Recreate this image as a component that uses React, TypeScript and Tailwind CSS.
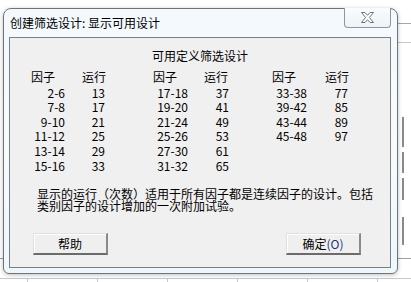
import React from "react";

const groups: { f: string[]; r: string[] }[] = [
  { f: ["2-6", "7-8", "9-10", "11-12", "13-14", "15-16"], r: ["13", "17", "21", "25", "29", "33"] },
  { f: ["17-18", "19-20", "21-24", "25-26", "27-30", "31-32"], r: ["37", "41", "49", "53", "61", "65"] },
  { f: ["33-38", "39-42", "43-44", "45-48"], r: ["77", "85", "89", "97"] },
];

function Col({ head, items, cls }: { head: string; items: string[]; cls: string }) {
  return (
    <div className={"flex flex-col " + cls}>
      <div className="leading-[14.6px] whitespace-nowrap mb-[1px]">{head}</div>
      {items.map((v) => (
        <div key={v} className="leading-[14.6px] text-right whitespace-nowrap">
          {v}
        </div>
      ))}
    </div>
  );
}

export default function App() {
  return (
    <div
      className="relative w-[411px] h-[282px] overflow-hidden bg-white text-black"
      style={{ fontFamily: '"Noto Sans CJK SC", "Noto Sans", sans-serif' }}
    >
      {/* background window pieces */}
      <div className="absolute left-[398px] top-[23px] w-[13px] h-px bg-[#a8a8a8]" />
      <div className="absolute left-[398px] top-[42px] w-[13px] h-px bg-[#c8c8c8]" />
      <div className="absolute left-[402px] top-[117px] w-[2px] h-[30px] bg-[#8a8a8a]" />
      <div className="absolute left-[402px] top-[152px] w-[2px] h-[21px] bg-[#8a8a8a]" />
      <div className="absolute left-[402px] top-[178px] w-[2px] h-[22px] bg-[#8a8a8a]" />
      <div className="absolute left-[402px] top-[217px] w-[2px] h-[28px] bg-[#8a8a8a]" />
      <div className="absolute left-[398px] top-[258px] w-[13px] h-px bg-[#a0a0a0]" />
      <div className="absolute left-0 top-[258px] w-[4px] h-px bg-[#a0a0a0]" />
      <div className="absolute left-0 top-[278px] w-[411px] h-px bg-[#c8c8c8]" />
      {[27, 97, 167, 237, 307, 377].map((x) => (
        <div key={x} className="absolute top-[278px] w-px h-[4px] bg-[#c8c8c8]" style={{ left: x }} />
      ))}

      {/* dialog window */}
      <div className="absolute left-[3px] top-[8px] w-[395px] h-[266px] rounded-t-[8px] rounded-b-[6px] border border-[#6f7478] bg-gradient-to-b from-[#f3f9fd] via-[#f7fbfe] to-[#eef7fc] shadow-[0_1px_4px_rgba(0,0,0,0.25)] flex flex-col">
        {/* title bar */}
        <div className="h-[28px] flex items-center pl-[6px] text-[12px] leading-[14px]">
          创建筛选设计: 显示可用设计
        </div>
        {/* close button */}
        <div className="absolute right-[6px] top-[-1px] w-[47px] h-[20px] border border-[#8e959b] border-t-0 rounded-b-[4px] bg-gradient-to-b from-[#fafcfd] to-[#edf3f7] flex items-center justify-center">
          <svg width="15" height="11" viewBox="0 0 15 11">
            <path
              d="M1.5 0.5 H5 L7.5 3.3 L10 0.5 H13.5 L9.4 5.5 L13.5 10.5 H10 L7.5 7.7 L5 10.5 H1.5 L5.6 5.5 Z"
              fill="#ffffff"
              stroke="#6d7378"
              strokeWidth="1"
              strokeLinejoin="round"
            />
          </svg>
        </div>

        {/* client area */}
        <div className="flex-1 ml-[5px] mr-[6px] mb-[5px] border border-[#7a7f84] bg-[#f0f0f0] flex flex-col text-[12px]">
          <div className="pt-[10px] leading-[15px] text-center">可用定义筛选设计</div>
          <div className="flex mt-[7px]">
            <Col head="因子" items={groups[0].f} cls="ml-[21px] w-[34px]" />
            <Col head="运行" items={groups[0].r} cls="ml-[17px] w-[23px]" />
            <Col head="因子" items={groups[1].f} cls="ml-[48px] w-[35px]" />
            <Col head="运行" items={groups[1].r} cls="ml-[16px] w-[25px]" />
            <Col head="因子" items={groups[2].f} cls="ml-[43px] w-[35px]" />
            <Col head="运行" items={groups[2].r} cls="ml-[18px] w-[23px]" />
          </div>
          <div className="mt-[15px] ml-[27px] leading-[12px] whitespace-nowrap">
            <div>显示的运行（次数）适用于所有因子都是连续因子的设计。包括</div>
            <div>类别因子的设计增加的一次附加试验。</div>
          </div>
          <div className="mt-[21px] flex justify-between pl-[23px] pr-[29px]">
            <button className="w-[75px] h-[22px] bg-[#efefef] border-t border-l border-t-[#e0e0e0] border-l-[#e0e0e0] border-b-2 border-r-2 border-b-[#6b6b6b] border-r-[#8a8a8a] shadow-[inset_1px_1px_0_#ffffff] text-[12px] leading-[14px] flex items-center justify-center">
              帮助
            </button>
            <button className="w-[75px] h-[22px] bg-[#efefef] border-t border-l border-t-[#e0e0e0] border-l-[#e0e0e0] border-b-2 border-r-2 border-b-[#6b6b6b] border-r-[#8a8a8a] shadow-[inset_1px_1px_0_#ffffff] text-[12px] leading-[14px] flex items-center justify-center">
              确定<span className="text-[#1e3276]">(O)</span>
            </button>
          </div>
        </div>
      </div>
    </div>
  );
}
